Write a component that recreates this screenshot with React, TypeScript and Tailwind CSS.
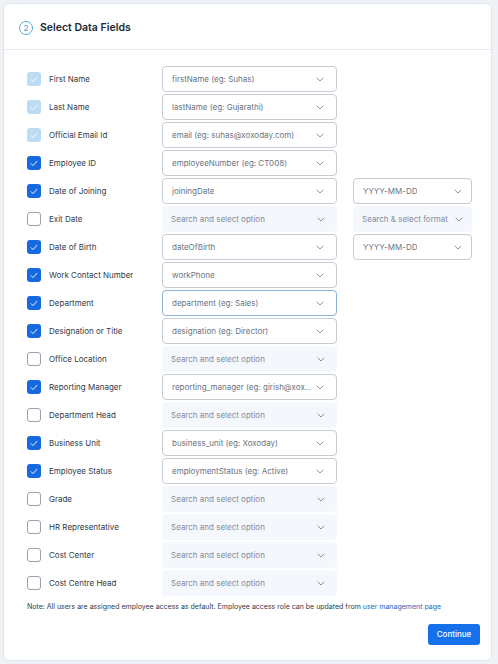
import React from "react";

type Row = {
    label: string;
    state: "locked" | "on" | "off";
    value?: string;
    format?: string;
    focused?: boolean;
};

const rows: Row[] = [
    { label: "First Name", state: "locked", value: "firstName (eg: Suhas)" },
    { label: "Last Name", state: "locked", value: "lastName (eg: Gujarathi)" },
    { label: "Official Email Id", state: "locked", value: "email (eg: suhas@xoxoday.com)" },
    { label: "Employee ID", state: "on", value: "employeeNumber (eg: CT008)" },
    { label: "Date of Joining", state: "on", value: "joiningDate", format: "YYYY-MM-DD" },
    { label: "Exit Date", state: "off", format: "" },
    { label: "Date of Birth", state: "on", value: "dateOfBirth", format: "YYYY-MM-DD" },
    { label: "Work Contact Number", state: "on", value: "workPhone" },
    { label: "Department", state: "on", value: "department (eg: Sales)", focused: true },
    { label: "Designation or Title", state: "on", value: "designation (eg: Director)" },
    { label: "Office Location", state: "off" },
    { label: "Reporting Manager", state: "on", value: "reporting_manager (eg: girish@xoxoday.com)" },
    { label: "Department Head", state: "off" },
    { label: "Business Unit", state: "on", value: "business_unit (eg: Xoxoday)" },
    { label: "Employee Status", state: "on", value: "employmentStatus (eg: Active)" },
    { label: "Grade", state: "off" },
    { label: "HR Representative", state: "off" },
    { label: "Cost Center", state: "off" },
    { label: "Cost Centre Head", state: "off" },
];

function Chevron() {
    return (
        <svg width="8" height="5" viewBox="0 0 8 5" fill="none" className="shrink-0">
            <path d="M1 1l3 3 3-3" stroke="#7b8494" strokeWidth="0.9" strokeLinecap="round" strokeLinejoin="round" />
        </svg>
    );
}

function Check({ state }: { state: Row["state"] }) {
    if (state === "off") {
        return <div className="h-[14px] w-[14px] rounded-[3px] border border-[#9aa1ad] bg-white" />;
    }
    return (
        <div
            className={
                state === "locked"
                    ? "flex h-[14px] w-[14px] items-center justify-center rounded-[3px] bg-[#bcdcf4]"
                    : "flex h-[14px] w-[14px] items-center justify-center rounded-[3px] bg-[#1769e0]"
            }
        >
            <svg width="8" height="7" viewBox="0 0 8 7" fill="none">
                <path d="M1 3.6l2 2L7 1.2" stroke="white" strokeWidth="0.9" strokeLinecap="round" strokeLinejoin="round" />
            </svg>
        </div>
    );
}

function Select({ text, empty, focused, width, pr }: { text: string; empty: boolean; focused?: boolean; width: string; pr: string }) {
    const base = "flex h-[26px] shrink-0 items-center justify-between rounded-[4px] pl-[9px] " + width + " " + pr;
    if (empty) {
        return (
            <div className={base + " bg-[#f4f7fb]"}>
                <span className="truncate text-[8px] text-[#858d9b]">{text}</span>
                <Chevron />
            </div>
        );
    }
    return (
        <div className={base + (focused ? " border border-[#8db3d4]" : " border border-[#c7ccd4]") + " bg-white"}>
            <span className="mr-1 truncate text-[8px] text-[#6b7381]">{text}</span>
            <Chevron />
        </div>
    );
}

export default function App() {
    return (
        <div className="min-h-screen bg-[#eef1f5] p-[3px] pr-[6px]" style={{ fontFamily: "Inter, 'Noto Sans', sans-serif" }}>
            <div className="flex h-[658px] flex-col rounded-[6px] border border-[#e1e5ea] bg-white">
                {/* Header */}
                <div className="flex h-[46px] items-center gap-[7px] border-b border-[#e6e9ee] px-[15px] pt-[2px]">
                    <div className="flex h-[14px] w-[14px] items-center justify-center rounded-full border border-[#5ba6d8] text-[8px] text-[#4f9bd0]">
                        2
                    </div>
                    <h1 className="text-[10.5px] font-semibold text-[#222833]">Select Data Fields</h1>
                </div>

                {/* Rows */}
                <div className="flex flex-col gap-[2px] pl-[23px] pr-[18px] pt-[16px]">
                    {rows.map((r) => (
                        <div key={r.label} className="flex h-[26px] items-center">
                            <div className="w-[22px] shrink-0">
                                <Check state={r.state} />
                            </div>
                            <span className="w-[113px] shrink-0 text-[8px] text-[#333944]">{r.label}</span>
                            <Select
                                text={r.value ?? "Search and select option"}
                                empty={!r.value}
                                focused={r.focused}
                                width="w-[175px]"
                                pr="pr-[12px]"
                            />
                            {r.format !== undefined && (
                                <div className="ml-[16px] shrink-0">
                                    <Select
                                        text={r.format || "Search & select format"}
                                        empty={!r.format}
                                        width="w-[119px]"
                                        pr="pr-[9px]"
                                    />
                                </div>
                            )}
                        </div>
                    ))}
                </div>

                <p className="pl-[23px] pr-[10px] pt-[6px] text-[7px] text-[#333944]">
                    Note: All users are assigned employee access as default. Employee access role can be updated from{" "}
                    <span className="text-[#2a5fb5]">user management page</span>
                </p>

                <div className="flex justify-end pr-[11px] pt-[11px]">
                    <button className="h-[21px] w-[52px] rounded-[3px] bg-[#1570ea] text-[8px] font-medium text-white">
                        Continue
                    </button>
                </div>
            </div>
        </div>
    );
}
